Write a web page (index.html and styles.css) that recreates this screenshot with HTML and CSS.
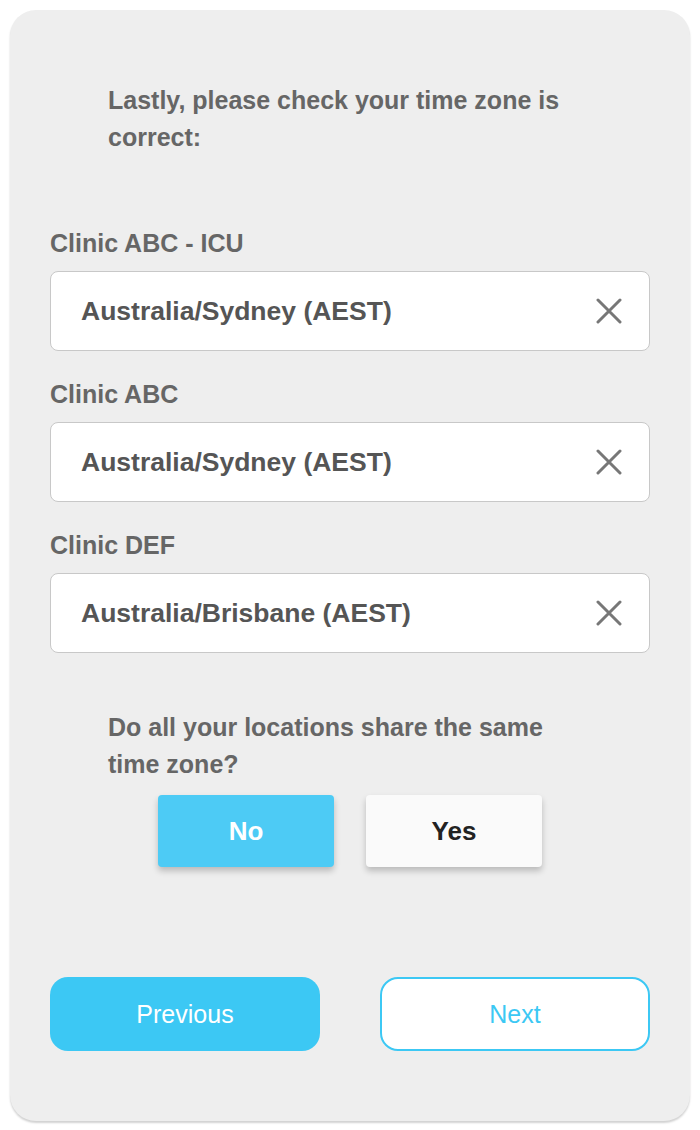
FILE: index.html
```html
<!DOCTYPE html>
<html>
<head>
<meta charset="utf-8">
<link rel="stylesheet" href="styles.css">
</head>
<body>
<div class="card">
  <p class="intro">Lastly, please check your time zone is correct:</p>
  <div class="fields">
    <div class="field">
      <div class="label">Clinic ABC - ICU</div>
      <div class="input"><span class="value">Australia/Sydney (AEST)</span>
        <svg class="clear" width="26" height="26" viewBox="0 0 26 26"><path d="M2 2L24 24M24 2L2 24" stroke="#777" stroke-width="3" stroke-linecap="round"/></svg>
      </div>
    </div>
    <div class="field">
      <div class="label">Clinic ABC</div>
      <div class="input"><span class="value">Australia/Sydney (AEST)</span>
        <svg class="clear" width="26" height="26" viewBox="0 0 26 26"><path d="M2 2L24 24M24 2L2 24" stroke="#777" stroke-width="3" stroke-linecap="round"/></svg>
      </div>
    </div>
    <div class="field">
      <div class="label">Clinic DEF</div>
      <div class="input"><span class="value">Australia/Brisbane (AEST)</span>
        <svg class="clear" width="26" height="26" viewBox="0 0 26 26"><path d="M2 2L24 24M24 2L2 24" stroke="#777" stroke-width="3" stroke-linecap="round"/></svg>
      </div>
    </div>
  </div>
  <p class="question">Do all your locations share the same time zone?</p>
  <div class="choices">
    <button class="choice choice-on">No</button>
    <button class="choice">Yes</button>
  </div>
  <div class="nav">
    <button class="nav-btn prev">Previous</button>
    <button class="nav-btn next">Next</button>
  </div>
</div>
</body>
</html>
```

FILE: styles.css
```css
html, body {
  margin: 0;
  padding: 0;
  background: #ffffff;
}
body {
  padding: 10px 10px 8px 10px;
  font-family: "Liberation Sans", Arial, sans-serif;
}
.card {
  background: #eeeeee;
  border-radius: 26px;
  box-shadow: 0 2px 2px rgba(0,0,0,0.18);
  height: 1111px;
  box-sizing: border-box;
  padding: 72px 40px 0 40px;
}
.intro, .question {
  margin: 0 0 0 58px;
  width: 470px;
  font-size: 25px;
  line-height: 37px;
  font-weight: bold;
  color: #666666;
}
.fields {
  margin-top: 73px;
  display: flex;
  flex-direction: column;
  gap: 29px;
}
.label {
  font-size: 25px;
  font-weight: bold;
  color: #666666;
  line-height: 28px;
  margin-bottom: 14px;
}
.input {
  background: #ffffff;
  border: 1px solid #c8c8c8;
  border-radius: 8px;
  height: 78px;
  display: flex;
  align-items: center;
  justify-content: space-between;
  padding: 0 27px 0 30px;
}
.value {
  font-size: 26.5px;
  color: #555555;
  font-weight: bold;
}
.clear {
  display: block;
}
.question {
  margin-top: 56px;
}
.choices {
  display: flex;
  justify-content: center;
  gap: 32px;
  margin-top: 12px;
}
.choice {
  width: 176px;
  height: 72px;
  border: none;
  border-radius: 4px;
  background: #fafafa;
  color: #222222;
  font-family: "Liberation Sans", Arial, sans-serif;
  font-size: 26px;
  font-weight: bold;
  box-shadow: 0 4px 6px rgba(0,0,0,0.22);
}
.choice-on {
  background: #4dcbf5;
  color: #ffffff;
}
.nav {
  display: flex;
  justify-content: space-between;
  margin-top: 110px;
}
.nav-btn {
  width: 270px;
  height: 74px;
  border-radius: 18px;
  font-family: "Liberation Sans", Arial, sans-serif;
  font-size: 25px;
  box-sizing: border-box;
}
.prev {
  background: #3cc8f4;
  border: none;
  color: #ffffff;
}
.next {
  background: #ffffff;
  border: 2px solid #3cc8f4;
  color: #3cc8f4;
}
```
